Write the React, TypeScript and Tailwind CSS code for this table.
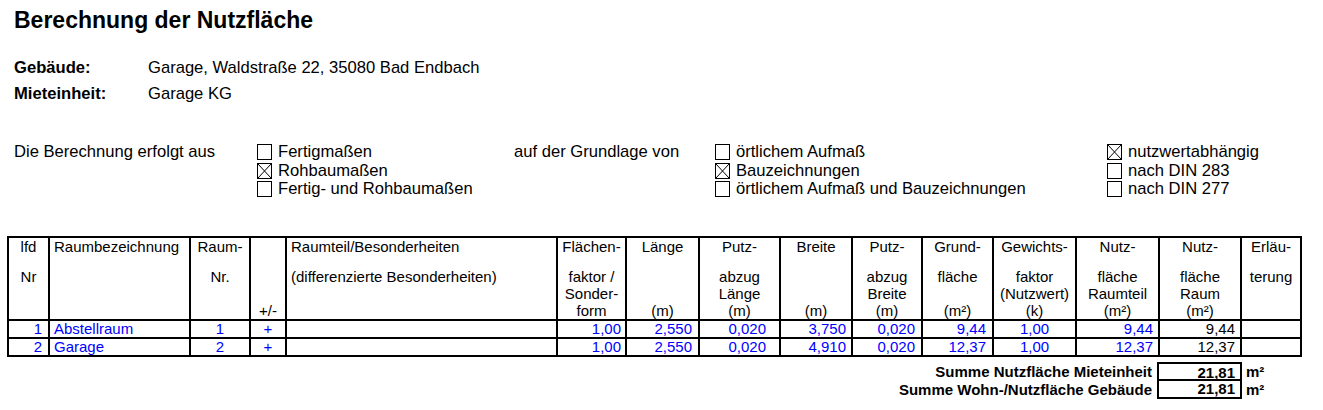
import React from "react";

type Align = "left" | "center" | "right";

type Col = {
  width: number;
  head: [string, string, string, string];
  headAlign: Align;
  cellAlign: Align;
  pr?: number;
};

const cols: Col[] = [
  { width: 41, head: ["lfd", "Nr", "", ""], headAlign: "center", cellAlign: "right", pr: 6 },
  { width: 141, head: ["Raumbezeichnung", "", "", ""], headAlign: "left", cellAlign: "left" },
  { width: 60, head: ["Raum-", "Nr.", "", ""], headAlign: "center", cellAlign: "center" },
  { width: 36, head: ["", "", "", "+/-"], headAlign: "center", cellAlign: "center" },
  { width: 271, head: ["Raumteil/Besonderheiten", "(differenzierte Besonderheiten)", "", ""], headAlign: "left", cellAlign: "left" },
  { width: 69, head: ["Flächen-", "faktor /", "Sonder-", "form"], headAlign: "center", cellAlign: "right", pr: 4 },
  { width: 73, head: ["Länge", "", "", "(m)"], headAlign: "center", cellAlign: "right", pr: 6 },
  { width: 81, head: ["Putz-", "abzug", "Länge", "(m)"], headAlign: "center", cellAlign: "right", pr: 13 },
  { width: 72, head: ["Breite", "", "", "(m)"], headAlign: "center", cellAlign: "right", pr: 5 },
  { width: 70, head: ["Putz-", "abzug", "Breite", "(m)"], headAlign: "center", cellAlign: "right", pr: 6 },
  { width: 71, head: ["Grund-", "fläche", "", "(m²)"], headAlign: "center", cellAlign: "right", pr: 6 },
  { width: 83, head: ["Gewichts-", "faktor", "(Nutzwert)", "(k)"], headAlign: "center", cellAlign: "center" },
  { width: 83, head: ["Nutz-", "fläche", "Raumteil", "(m²)"], headAlign: "center", cellAlign: "right", pr: 5 },
  { width: 82, head: ["Nutz-", "fläche", "Raum", "(m²)"], headAlign: "center", cellAlign: "right", pr: 5 },
  { width: 60, head: ["Erläu-", "terung", "", ""], headAlign: "center", cellAlign: "left" },
];

const rows = [
  ["1", "Abstellraum", "1", "+", "", "1,00", "2,550", "0,020", "3,750", "0,020", "9,44", "1,00", "9,44", "9,44", ""],
  ["2", "Garage", "2", "+", "", "1,00", "2,550", "0,020", "4,910", "0,020", "12,37", "1,00", "12,37", "12,37", ""],
];

const alignClass: Record<Align, string> = {
  left: "text-left pl-[4px]",
  center: "text-center",
  right: "text-right",
};

function Box({ checked }: { checked?: boolean }) {
  return (
    <span className="inline-block w-[15px] h-[16px] border border-black mr-[6px] shrink-0 relative">
      {checked && (
        <svg className="absolute inset-0" width="13" height="14" viewBox="0 0 13 14">
          <line x1="0" y1="0" x2="13" y2="14" stroke="black" strokeWidth="1" />
          <line x1="13" y1="0" x2="0" y2="14" stroke="black" strokeWidth="1" />
        </svg>
      )}
    </span>
  );
}

function Option({ label, checked }: { label: string; checked?: boolean }) {
  return (
    <div className="flex items-center h-[18.5px]">
      <Box checked={checked} />
      <span>{label}</span>
    </div>
  );
}

export default function App() {
  return (
    <div
      className="w-[1323px] h-[410px] bg-white text-black overflow-hidden"
      style={{ fontFamily: '"Liberation Sans", Arial, sans-serif' }}
    >
      <h1 className="pl-[14px] pt-[7px] text-[23px] leading-[26px] font-bold">Berechnung der Nutzfläche</h1>

      <div className="mt-[22px] pl-[14px] text-[16.6px] leading-[26px]">
        <div className="flex">
          <span className="w-[134px] font-bold">Gebäude:</span>
          <span>Garage, Waldstraße 22, 35080 Bad Endbach</span>
        </div>
        <div className="flex">
          <span className="w-[134px] font-bold">Mieteinheit:</span>
          <span>Garage KG</span>
        </div>
      </div>

      <div className="mt-[36px] pl-[14px] flex text-[16.6px] leading-[18.5px]">
        <div className="w-[243px]">Die Berechnung erfolgt aus</div>
        <div className="w-[257px]">
          <Option label="Fertigmaßen" />
          <Option label="Rohbaumaßen" checked />
          <Option label="Fertig- und Rohbaumaßen" />
        </div>
        <div className="w-[201px]">auf der Grundlage von</div>
        <div className="w-[392px]">
          <Option label="örtlichem Aufmaß" />
          <Option label="Bauzeichnungen" checked />
          <Option label="örtlichem Aufmaß und Bauzeichnungen" />
        </div>
        <div>
          <Option label="nutzwertabhängig" checked />
          <Option label="nach DIN 283" />
          <Option label="nach DIN 277" />
        </div>
      </div>

      <table className="mt-[37px] ml-[7px] w-[1294px] table-fixed border-collapse text-[15px]">
        <colgroup>
          {cols.map((c, i) => (
            <col key={i} style={{ width: c.width }} />
          ))}
        </colgroup>
        <thead>
          <tr>
            {cols.map((c, i) => (
              <th key={i} className={`border-2 border-black p-0 align-top font-normal ${alignClass[c.headAlign]}`}>
                <div className="leading-[17px] whitespace-nowrap">
                  <div className="h-[17px]">{c.head[0]}</div>
                  <div className="h-[17px] mt-[13px]">{c.head[1]}</div>
                  <div className="h-[17px]">{c.head[2]}</div>
                  <div className="h-[17px]">{c.head[3]}</div>
                </div>
              </th>
            ))}
          </tr>
        </thead>
        <tbody>
          {rows.map((r, ri) => (
            <tr key={ri}>
              {r.map((v, ci) => (
                <td
                  key={ci}
                  className={`border-2 border-black p-0 h-[18px] leading-[16px] whitespace-nowrap ${alignClass[cols[ci].cellAlign]} ${ci === 13 ? "text-black" : "text-[#0000ff]"}`}
                  style={cols[ci].pr ? { paddingRight: cols[ci].pr } : undefined}
                >
                  {v}
                </td>
              ))}
            </tr>
          ))}
        </tbody>
      </table>

      <div className="mt-[5px] ml-[7px] w-[1294px] flex text-[15px] font-bold leading-[18px]">
        <div className="flex-1 text-right pr-[5px] pt-[1px]">
          <div>Summe Nutzfläche Mieteinheit</div>
          <div>Summe Wohn-/Nutzfläche Gebäude</div>
        </div>
        <div className="w-[85px] border-2 border-black text-right">
          <div className="h-[17px] leading-[17px] pr-[5px] border-b-2 border-black">21,81</div>
          <div className="h-[16px] leading-[16px] pr-[5px]">21,81</div>
        </div>
        <div className="w-[59px] pl-[4px] pt-[1px]">
          <div>m²</div>
          <div>m²</div>
        </div>
      </div>
    </div>
  );
}
